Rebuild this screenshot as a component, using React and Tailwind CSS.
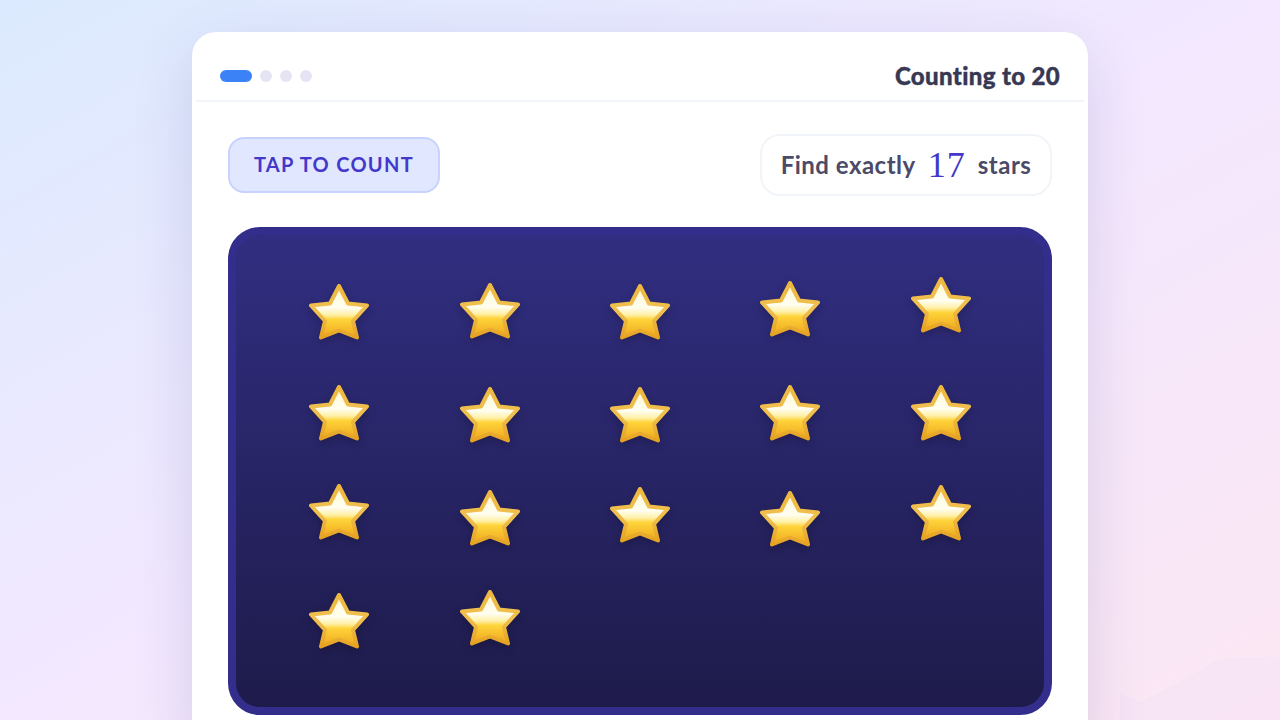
const stars = [
  '-translate-y-[3px]', '-translate-y-1', '-translate-y-[3px]', '-translate-y-1.5', '-translate-y-2.5',
  '-translate-y-1.5', '-translate-y-1', '-translate-y-1', '-translate-y-1.5', '-translate-y-1.5',
  '-translate-y-[11px]', '-translate-y-[5px]', '-translate-y-2', '-translate-y-1', '-translate-y-2.5',
  '-translate-y-1.5', '-translate-y-[9px]',
];

const Star = ({ id }) => (
  <svg viewBox="0 0 64 64" className="h-16 w-16 blur-[0.5px] drop-shadow-[0_3px_4px_rgba(0,0,0,0.22)]">
    <defs>
      <linearGradient id={id} x1="0" y1="0" x2="0" y2="1">
        <stop offset="0" stopColor="#fff3b8" />
        <stop offset="0.22" stopColor="#fffbe2" />
        <stop offset="0.42" stopColor="#fffef0" />
        <stop offset="0.56" stopColor="#fff0a8" />
        <stop offset="0.65" stopColor="#fed43a" />
        <stop offset="1" stopColor="#eea61e" />
      </linearGradient>
      <linearGradient id={`${id}-edge`} x1="0" y1="0" x2="0" y2="1">
        <stop offset="0" stopColor="#eeb840" />
        <stop offset="0.5" stopColor="#f0c050" />
        <stop offset="1" stopColor="#e6a322" />
      </linearGradient>
    </defs>
    <polygon
      points="32,6 41,23.5 60,25.5 46,41 50,57.5 32,50.5 14,57.5 18,41 4,25.5 23,23.5"
      fill={`url(#${id})`}
      stroke={`url(#${id}-edge)`}
      strokeWidth="4"
      strokeLinejoin="round"
    />
  </svg>
);

const App = () => {
  return (
    <div className="relative h-screen overflow-hidden bg-gradient-to-br from-[#dbeafe] via-[#f3e8ff] to-[#fce7f3] p-8 font-['Lato',sans-serif]">
      {/* Faint hill, bottom right */}
      <svg viewBox="0 0 160 63" className="absolute bottom-0 right-0 h-[63px] w-40">
        <polygon points="0,36 20,45 63,23 97,3 110,0 160,0 160,63 0,63" fill="#c7d2fe" fillOpacity="0.08" />
      </svg>

      <div className="relative mx-auto w-[896px] rounded-3xl bg-white p-1 pb-8 shadow-[0_20px_60px_rgba(49,46,129,0.15)]">
        {/* Top bar */}
        <div className="flex h-[66px] items-center justify-between border-b-2 border-slate-100 px-6 pt-4">
          <div className="flex items-center gap-2">
            <div className="h-3 w-8 rounded-full bg-[#3b82f6]" />
            <div className="h-3 w-3 rounded-full bg-[#e5e4f4]" />
            <div className="h-3 w-3 rounded-full bg-[#e5e4f4]" />
            <div className="h-3 w-3 rounded-full bg-[#e5e4f4]" />
          </div>
          <div className="text-2xl font-black tracking-[0.35px] text-[#373853] [-webkit-text-stroke:0.4px_#373853]">Counting to 20</div>
        </div>

        <div className="px-8 pt-8">
          {/* Prompt row */}
          <div className="flex items-center justify-between">
            <button className="h-14 w-[212px] rounded-2xl border-2 border-[#c7d2fe] bg-[#e0e7ff] pb-0.5 text-xl font-bold tracking-[1.3px] text-[#4338ca]">
              TAP TO COUNT
            </button>
            <div className="flex h-[62px] w-[292px] items-center justify-center gap-3 rounded-[20px] border-2 border-slate-100 bg-white text-2xl font-bold tracking-[0.5px] text-[#4b4b68]">
              <span>Find exactly</span>
              <span className="font-['Liberation_Serif',serif] text-4xl font-normal tracking-[1px] text-[#4338ca]">17</span>
              <span>stars</span>
            </div>
          </div>

          {/* Star board */}
          <div className="mt-[31px] grid h-[488px] grid-cols-5 content-start gap-2 rounded-[32px] border-8 border-[#332d8b] bg-gradient-to-b from-[#312e81] to-[#1e1b4b] p-8">
            {stars.map((offset, i) => (
              <div key={i} className={`flex h-24 items-center justify-center ${offset}`}>
                <Star id={`star-${i}`} />
              </div>
            ))}
          </div>
        </div>
      </div>
    </div>
  );
};

export default App;
